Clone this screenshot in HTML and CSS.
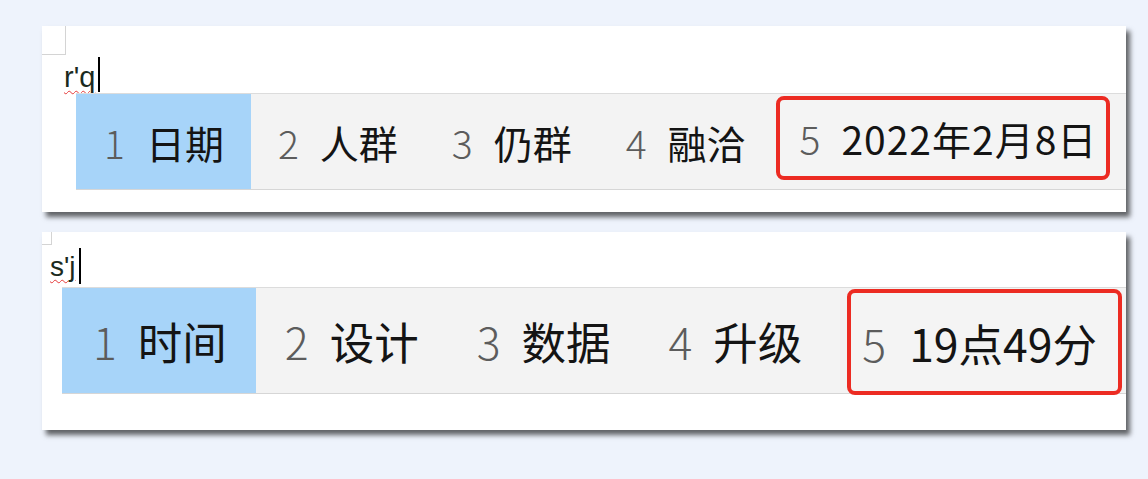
FILE: index.html
```html
<!DOCTYPE html>
<html lang="zh-CN">
<head>
<meta charset="utf-8">
<title>输入法候选</title>
<link rel="stylesheet" href="styles.css">
</head>
<body>
<div class="page">
  <div class="panel p1">
    <div class="input">
      <span class="typed">r'q</span><span class="caret"></span>
    </div>
    <div class="bar">
      <div class="cand sel"><span class="num">1</span><span class="word">日期</span></div>
      <div class="cand"><span class="num">2</span><span class="word">人群</span></div>
      <div class="cand"><span class="num">3</span><span class="word">仍群</span></div>
      <div class="cand"><span class="num">4</span><span class="word">融洽</span></div>
      <div class="cand mark"><span class="num">5</span><span class="word">2022年2月8日</span></div>
    </div>
  </div>
  <div class="panel p2">
    <div class="input">
      <span class="typed">s'j</span><span class="caret"></span>
    </div>
    <div class="bar">
      <div class="cand sel"><span class="num">1</span><span class="word">时间</span></div>
      <div class="cand"><span class="num">2</span><span class="word">设计</span></div>
      <div class="cand"><span class="num">3</span><span class="word">数据</span></div>
      <div class="cand"><span class="num">4</span><span class="word">升级</span></div>
      <div class="cand mark"><span class="num">5</span><span class="word">19点49分</span></div>
    </div>
  </div>
</div>
</body>
</html>
```

FILE: styles.css
```css
html, body {
  margin: 0;
  padding: 0;
  background: #eef3fc;
}

.page {
  width: 1148px;
  height: 479px;
  padding: 26px 0 0 42px;
  box-sizing: border-box;
  display: flex;
  flex-direction: column;
  gap: 20px;
}

.panel {
  position: relative;
  width: 1084px;
  background: #ffffff;
  box-shadow: 4px 5px 5px rgba(0, 0, 0, 0.6);
  display: flex;
  flex-direction: column;
}

.panel::before {
  content: "";
  position: absolute;
  left: 0;
  top: 0;
  border-right: 1px solid #d4d4d4;
  border-bottom: 1px solid #d4d4d4;
}

.p1 { height: 186px; }
.p1::before { width: 23px; height: 28px; }
.p2 { height: 198px; }
.p2::before { width: 9px; height: 12px; }

.input {
  display: flex;
  align-items: flex-end;
  box-sizing: border-box;
}

.typed {
  font-family: "Liberation Sans", Arial, sans-serif;
  line-height: 1;
  color: #1b2a1e;
  text-decoration: underline wavy #e53a3a;
  text-decoration-thickness: 1px;
  text-underline-offset: 3px;
}

.caret {
  width: 2px;
  background: #000;
}

.p1 .input { height: 67px; padding: 0 0 1px 22px; }
.p1 .typed { font-size: 29px; }
.p1 .caret { height: 35px; margin-left: 3px; }

.p2 .input { height: 55px; padding: 0 0 3px 8px; }
.p2 .typed { font-size: 28px; margin-bottom: 3px; }
.p2 .caret { height: 36px; margin-left: 3px; }

.bar {
  display: flex;
  align-items: stretch;
  background: #f3f3f3;
  border-top: 1px solid #dcdcdc;
  border-bottom: 1px solid #d6d6d6;
  font-family: "Noto Sans CJK SC", "Microsoft YaHei", sans-serif;
  color: #141414;
}

.p1 .bar { margin-left: 34px; height: 97px; box-sizing: border-box; font-size: 39px; }
.p2 .bar { margin-left: 20px; height: 107px; box-sizing: border-box; font-size: 44.5px; }

.cand {
  display: flex;
  align-items: center;
  white-space: nowrap;
  box-sizing: border-box;
}

.num {
  color: #5c5c5c;
  font-weight: 300;
}

.sel { background: #a7d4f9; }

.p1 .cand { padding: 0 27px; }
.p1 .sel { padding-left: 28px; }
.p1 .num { margin-right: 21px; }

.p2 .cand { padding: 0 29px; }
.p2 .sel { padding-left: 31px; }
.p2 .num { margin-right: 21px; }

.mark {
  border: 4px solid #ec2b22;
  border-radius: 8px;
  background: #f4f4f4;
}

.p1 .mark {
  margin: 2px 0 9px 3px;
  padding: 0 9px 0 20px;
}

.p1 .mark .word { letter-spacing: 1px; }

.p2 .mark {
  margin: 1px 0 -2px 16px;
  padding: 0 21px 0 11px;
}

.p2 .mark .num { margin-right: 23px; }
```
